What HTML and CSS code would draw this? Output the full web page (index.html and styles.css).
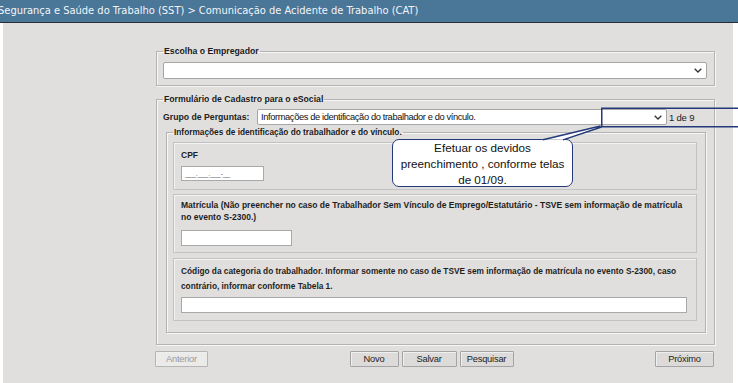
FILE: index.html
```html
<!DOCTYPE html>
<html lang="pt-BR">
<head>
<meta charset="utf-8">
<title>CAT</title>
<link rel="stylesheet" href="styles.css">
</head>
<body>
<div class="topbar"><span class="crumb">Segurança e Saúde do Trabalho (SST) &gt; Comunicação de Acidente de Trabalho (CAT)</span></div>
<div class="main">
  <fieldset class="fs fs-emp">
    <legend>Escolha o Empregador</legend>
    <div class="select sel-emp">
      <span class="sel-text"></span>
      <svg class="chev" width="8" height="5" viewBox="0 0 8 5"><path d="M0.7 0.7 L4 4 L7.3 0.7" fill="none" stroke="#333" stroke-width="1.3"/></svg>
    </div>
  </fieldset>

  <fieldset class="fs fs-form">
    <legend>Formulário de Cadastro para o eSocial</legend>
    <div class="grupo-row">
      <span class="grupo-label">Grupo de Perguntas:</span>
      <div class="select sel-grupo">
        <span class="sel-text">Informações de identificação do trabalhador e do vínculo.</span>
        <svg class="chev" width="8" height="5" viewBox="0 0 8 5"><path d="M0.7 0.7 L4 4 L7.3 0.7" fill="none" stroke="#333" stroke-width="1.3"/></svg>
      </div>
      <span class="pager">1 de 9</span>
    </div>

    <fieldset class="fs fs-inner">
      <legend>Informações de identificação do trabalhador e do vínculo.</legend>
      <div class="qbox q-cpf">
        <div class="qlabel">CPF</div>
        <div class="input in-cpf"><span class="mask">___.___.___-__</span></div>
      </div>
      <div class="qbox q-mat">
        <div class="qlabel">Matrícula (Não preencher no caso de Trabalhador Sem Vínculo de Emprego/Estatutário - TSVE sem informação de matrícula<br>no evento S-2300.)</div>
        <div class="input in-mat"></div>
      </div>
      <div class="qbox q-cod">
        <div class="qlabel lbl-cod">Código da categoria do trabalhador. Informar somente no caso de TSVE sem informação de matrícula no evento S-2300, caso<br>contrário, informar conforme Tabela 1.</div>
        <div class="input in-cod"></div>
      </div>
    </fieldset>
  </fieldset>

  <div class="buttons">
    <div class="btn-group"><button class="btn btn-disabled">Anterior</button></div>
    <div class="btn-group">
      <button class="btn btn-novo">Novo</button>
      <button class="btn btn-salvar">Salvar</button>
      <button class="btn btn-pesq">Pesquisar</button>
    </div>
    <div class="btn-group"><button class="btn btn-prox">Próximo</button></div>
  </div>
</div>

<div class="callout">Efetuar os devidos<br>preenchimento , conforme telas<br>de 01/09.</div>
<svg class="annot" width="200" height="40" viewBox="0 0 200 40">
  <rect x="61.75" y="1.25" width="150" height="18.5" fill="none" stroke="#23397a" stroke-width="1.5"/>
  <polygon points="3,32.8 61,19 23,32.8" fill="#fff"/>
  <path d="M3 32.8 L60.5 19 M23 32.8 L61.5 20" fill="none" stroke="#23397a" stroke-width="1.4"/>
</svg>
</body>
</html>
```

FILE: styles.css
```css
html, body {
  margin: 0;
  padding: 0;
  background: #ffffff;
}
body {
  width: 738px;
  height: 383px;
  overflow: hidden;
  position: relative;
  font-family: "Liberation Sans", Arial, sans-serif;
}
.topbar {
  height: 22px;
  background: #4a7698;
  border-bottom: 1px solid #2b2f33;
  overflow: hidden;
  white-space: nowrap;
}
.crumb {
  display: block;
  margin-left: -2px;
  font-family: "DejaVu Sans", sans-serif;
  font-stretch: condensed;
  font-size: 11px;
  line-height: 22px;
  color: #f2f5f8;
}
.main {
  margin: 0 5px 0 3px;
  height: 360px;
  background: #e0dfdd;
  padding-left: 153px;
  padding-top: 23px;
  box-sizing: border-box;
}
.fs {
  margin: 0;
  border: 1px solid #b3b3b3;
  box-shadow: inset 1px 1px 0 #f6f6f6, 1px 1px 0 #f6f6f6;
  min-width: 0;
}
.fs > legend {
  padding: 0 1px;
  font-size: 8.7px;
  font-weight: bold;
  line-height: 10px;
  color: #1a1a1a;
}
.fs-emp {
  width: 559px;
  box-sizing: border-box;
  padding: 6px 7px 6px 6px;
}
.select {
  display: flex;
  align-items: center;
  background: #fff;
  border: 1px solid #a6a6a6;
  border-radius: 2px;
  box-sizing: border-box;
}
.sel-emp {
  height: 17px;
  justify-content: flex-end;
  padding-right: 4px;
}
.fs-form {
  margin-top: 8px;
  width: 559px;
  box-sizing: border-box;
  padding: 5px 8px 11px 6px;
}
.grupo-row {
  display: flex;
  align-items: center;
  height: 16px;
}
.grupo-label {
  width: 94px;
  font-size: 8.7px;
  font-weight: bold;
  color: #222;
}
.sel-grupo {
  width: 410px;
  height: 16px;
  padding: 0 4px 0 3px;
  justify-content: space-between;
}
.sel-text {
  font-family: "Liberation Sans Narrow", "Liberation Sans", sans-serif;
  font-size: 9.3px;
  letter-spacing: -0.38px;
  color: #111;
  white-space: nowrap;
}
.pager {
  margin-left: 2px;
  font-family: "Liberation Sans Narrow", "Liberation Sans", sans-serif;
  font-size: 9.5px;
  letter-spacing: -0.2px;
  color: #222;
}
.fs-inner {
  margin-top: 2px;
  margin-left: 3px;
  padding: 5px 8px 11px 6px;
}
.fs-inner > legend {
  font-size: 8.3px;
}
.qbox {
  border: 1px solid #c2c2c2;
  box-shadow: inset 1px 1px 0 #f3f3f3;
  padding-left: 7px;
  padding-right: 7px;
}
.qlabel {
  font-size: 8.5px;
  font-weight: bold;
  color: #1e1e1e;
  line-height: 12px;
  white-space: nowrap;
}
.input {
  background: #fff;
  border: 1px solid #a9a9a9;
  box-sizing: border-box;
}
.q-cpf {
  padding-top: 6px;
  padding-bottom: 8px;
}
.in-cpf {
  margin-top: 5px;
  width: 83px;
  height: 15px;
  display: flex;
  align-items: flex-end;
  padding: 0 0 3px 3px;
}
.mask {
  font-size: 7px;
  line-height: 7px;
  color: #666;
  letter-spacing: -0.3px;
}
.q-mat {
  margin-top: 4px;
  padding-top: 4px;
  padding-bottom: 6px;
}
.in-mat {
  margin-top: 7px;
  width: 111px;
  height: 16px;
}
.q-cod {
  margin-top: 5px;
  padding-top: 5px;
  padding-bottom: 7px;
}
.lbl-cod {
  font-size: 8.3px;
  line-height: 15px;
}
.in-cod {
  margin-top: 3px;
  width: 506px;
  height: 16px;
}
.buttons {
  width: 559px;
  margin-top: 6px;
  margin-left: -1px;
  display: flex;
  justify-content: space-between;
}
.btn-group {
  display: flex;
  gap: 3px;
}
.btn {
  margin: 0;
  height: 16px;
  padding: 0;
  font-family: "Liberation Sans Narrow", "Liberation Sans", sans-serif;
  font-size: 9.3px;
  letter-spacing: -0.2px;
  color: #222;
  background: #dcdbda;
  border: 1px solid #a4a4a4;
  box-shadow: inset 1px 1px 0 #efefef;
  border-radius: 1px;
}
.btn-disabled {
  width: 53px;
  color: #999;
  background: #ebebea;
  border-color: #b5b5b5;
}
.btn-novo { width: 49px; }
.btn-salvar { width: 55px; }
.btn-pesq { width: 54px; }
.btn-prox { width: 59px; }

.callout {
  position: absolute;
  left: 392px;
  top: 139px;
  width: 181px;
  height: 48px;
  box-sizing: border-box;
  border: 1.5px solid #23397a;
  border-radius: 7px;
  background: #fff;
  text-align: center;
  font-family: "Liberation Sans", Arial, sans-serif;
  font-size: 11.7px;
  line-height: 16px;
  color: #111;
}
.annot {
  position: absolute;
  left: 540px;
  top: 107px;
  overflow: visible;
}
```
